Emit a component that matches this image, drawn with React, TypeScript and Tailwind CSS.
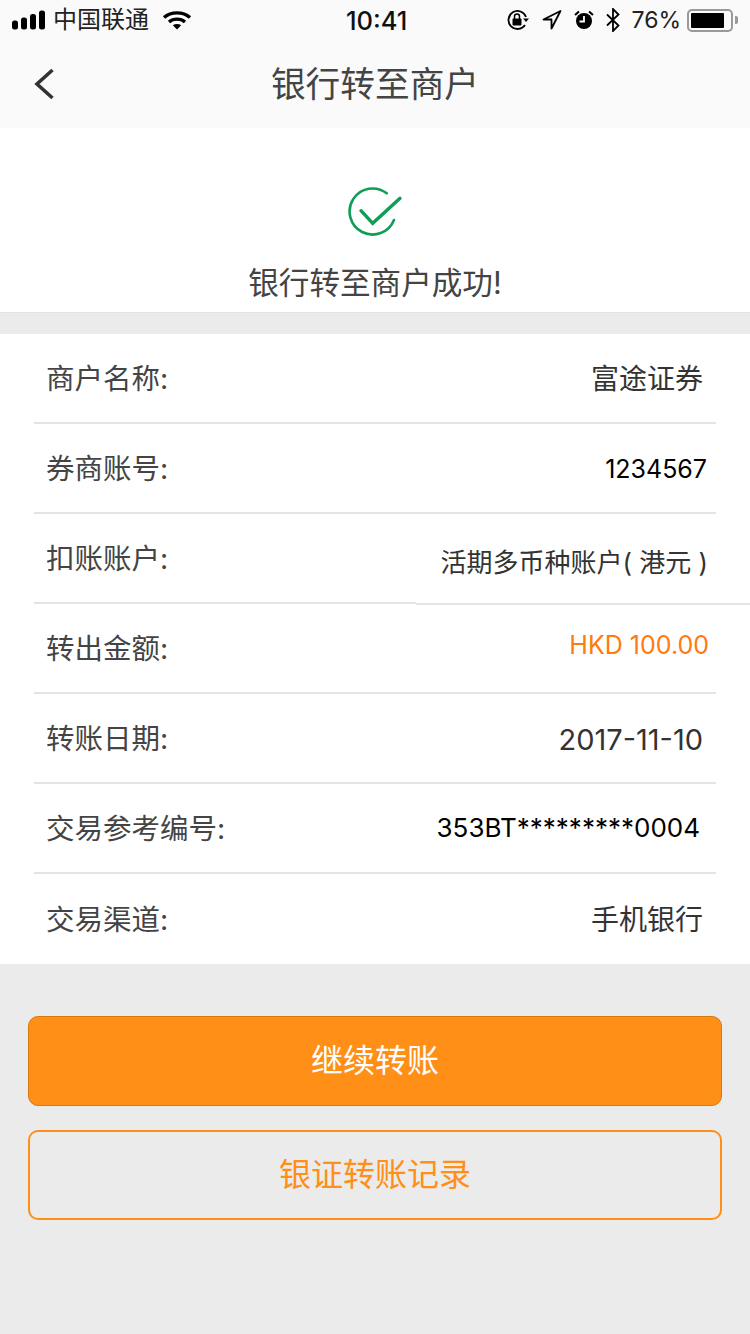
const font = "[font-family:'Inter','Noto_Sans_CJK_SC',sans-serif]";

const rows = [
  { label: "商户名称:", value: "富途证券", cls: "pr-[47px] text-[28px] text-[#333333]" },
  { label: "券商账号:", value: "1234567", cls: "pr-[43px] text-[25px] text-black" },
  { label: "扣账账户:", value: "活期多币种账户( 港元 )", cls: "pr-[42px] pt-[8px] text-[26px] text-[#333333]" },
  { label: "转出金额:", value: "HKD 100.00", cls: "pr-[41px] pb-[8px] text-[25px] text-[#ff7a0f]" },
  { label: "转账日期:", value: "2017-11-10", cls: "pr-[47px] text-[29px] text-[#333333]" },
  { label: "交易参考编号:", value: "353BT*********0004", cls: "pr-[50px] pb-[2px] text-[26px] text-black" },
  { label: "交易渠道:", value: "手机银行", cls: "pr-[47px] text-[28px] text-[#333333]" },
];

function StatusBar() {
  return (
    <div className="h-[40px] flex items-center justify-between px-[12px] text-[#111111] relative">
      <div className="flex items-center">
        <svg width="34" height="20" viewBox="0 0 34 20" fill="#000">
          <rect x="0" y="10.500" width="6" height="9" rx="2.500" />
          <rect x="9" y="7.500" width="6" height="12" rx="2.500" />
          <rect x="18" y="4" width="6" height="15.500" rx="2.500" />
          <rect x="27" y="0.500" width="6" height="19" rx="2.500" />
        </svg>
        <span className="ml-[7px] text-[24px] leading-none text-[#222222]">中国联通</span>
        <svg className="ml-[13px]" width="30" height="22" viewBox="0 0 30 22" fill="none" stroke="#000" strokeWidth="3.400">
          <path d="M2 8.500c7-6.200 19-6.200 26 0" />
          <path d="M7 13c4.500-3.800 11.500-3.800 16 0" />
          <path d="M15 20.500l-4.200-4.200c2.400-1.700 6-1.700 8.400 0z" fill="#000" stroke="none" />
        </svg>
      </div>
      <span className="absolute left-[346px] top-[6px] text-[25.500px] leading-[30px] font-medium text-[#111111]">10:41</span>
      <div className="flex items-center">
        <svg width="24" height="22" viewBox="0 0 24 22" fill="none" stroke="#000" strokeWidth="1.800">
          <path d="M20 8a9 9 0 1 0-1 8" />
          <path d="M17 9.500h6l-3 3.500z" fill="#000" stroke="none" />
          <rect x="6.500" y="9.500" width="9" height="7" rx="1" fill="#000" stroke="none" />
          <path d="M8.500 10V7.500a2.500 2.500 0 0 1 5 0V10" strokeWidth="1.500" />
        </svg>
        <svg className="ml-[12px]" width="20" height="22" viewBox="0 0 20 22" fill="none" stroke="#000" strokeWidth="1.800">
          <path d="M18.500 2L1.500 10.500h8v9z" strokeLinejoin="round" />
        </svg>
        <svg className="ml-[12px]" width="20" height="22" viewBox="0 0 20 22">
          <circle cx="10" cy="12" r="8" fill="#000" />
          <path d="M10 7v5.500H5.500" fill="none" stroke="#fff" strokeWidth="1.800" />
          <path d="M1 6l4-3.500M19 6l-4-3.500" stroke="#000" strokeWidth="2" />
        </svg>
        <svg className="ml-[12px]" width="14" height="24" viewBox="0 0 14 24" fill="none" stroke="#000" strokeWidth="1.800">
          <path d="M1 6.500l11.500 11L7 23V1l5.500 5.500L1 17.500" />
        </svg>
        <span className="ml-[11px] text-[23px] leading-none text-[#222222]">76%</span>
        <div className="ml-[6px] w-[46px] h-[23px] rounded-[5px] border-2 border-[#999999] p-[2px]">
          <div className="w-[33px] h-full bg-black rounded-[1px]" />
        </div>
        <div className="ml-[2px] w-[3px] h-[8px] rounded-r-[2px] bg-[#999999]" />
      </div>
    </div>
  );
}

export default function App() {
  return (
    <div className={`w-[750px] h-[1334px] bg-[#ebebeb] overflow-hidden ${font}`}>
      <div className="h-[128px] bg-[#fafafa]">
        <StatusBar />
        <div className="h-[88px] relative flex items-center justify-center pt-[1px]">
          <svg className="absolute left-[34px] top-[28px]" width="22" height="34" viewBox="0 0 22 34" fill="none" stroke="#333333" strokeWidth="3.600">
            <path d="M18.500 2L3 16l15.500 14" />
          </svg>
          <span className="text-[34.700px] leading-none text-[#444444]">银行转至商户</span>
        </div>
      </div>

      <div className="h-[185px] bg-white flex flex-col items-center border-b border-[#e2e2e2]">
        <svg className="mt-[56px]" width="58" height="54" viewBox="0 0 58 54" fill="none" stroke="#0f9d58" strokeLinecap="round">
          <path d="M48 36A23 23 0 1 1 40.700 9.300" strokeWidth="2.600" />
          <path d="M15 26.700l11.700 12.600L54 14.300" strokeWidth="3.400" />
        </svg>
        <span className="mt-[27px] text-[30.600px] leading-[36px] text-[#444444]">银行转至商户成功!</span>
      </div>

      <div className="mt-[21px] bg-white h-[630px]">
        {rows.map((r, i) => (
          <div key={r.label} className="h-[90px] flex flex-col">
            <div className="flex-1 flex items-center justify-between pl-[46px] pt-[2px]">
              <span className="text-[28.500px] leading-none text-[#444444]">{r.label}</span>
              <span className={`leading-none ${r.cls}`}>{r.value}</span>
            </div>
            {i === 2 && (
              <div className="flex h-[2px]">
                <div className="ml-[34px] w-[382px] h-[2px] bg-[#e4e4e4]" />
                <div className="w-[334px] h-[2px] mt-[1px] bg-[#e4e4e4]" />
              </div>
            )}
            {i !== 2 && i !== 6 && <div className="mx-[34px] h-[2px] bg-[#e4e4e4]" />}
          </div>
        ))}
      </div>

      <div className="px-[28px] pt-[52px] flex flex-col gap-[24px]">
        <button className="h-[90px] rounded-[10px] bg-[#ff8f17] border border-[#d57a12] text-white text-[32px]">继续转账</button>
        <button className="h-[90px] rounded-[10px] border-2 border-[#ff8f17] text-[#ff8f17] text-[32px]">银证转账记录</button>
      </div>
    </div>
  );
}
